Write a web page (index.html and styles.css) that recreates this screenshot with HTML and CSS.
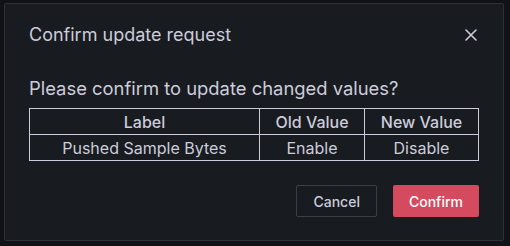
FILE: index.html
```html
<!DOCTYPE html>
<html lang="en">
<head>
    <meta charset="UTF-8">
    <title>Confirm update request</title>
    <link rel="stylesheet" href="styles.css">
</head>
<body>

<!--The confirm dialog-->
<div class="modal">
    <div class="modalHeader">
        <h2 class="modalTitle">Confirm update request</h2>
        <button class="closeBtn" aria-label="Close">
            <svg width="12" height="12" viewBox="0 0 12 12">
                <path d="M1 1 L11 11 M11 1 L1 11" stroke="#ccccdc" stroke-width="1.6" stroke-linecap="round"/>
            </svg>
        </button>
    </div>

    <div class="modalBody">
        <p class="question">Please confirm to update changed values?</p>

        <table class="changeTable">
            <tr>
                <th class="colLabel">Label</th>
                <th class="colOld">Old Value</th>
                <th class="colNew">New Value</th>
            </tr>
            <tr>
                <td>Pushed Sample Bytes</td>
                <td>Enable</td>
                <td>Disable</td>
            </tr>
        </table>

        <div class="buttonRow">
            <button class="btn btnCancel">Cancel</button>
            <button class="btn btnConfirm">Confirm</button>
        </div>
    </div>
</div>

</body>
</html>
```

FILE: styles.css
```css
/*CSS for whole page*/
body {
    margin: 0;
    background-color: #111217;
    font-family: Inter, "Noto Sans", sans-serif;
    color: #ccccdc;
}

/*CSS for the dialog box*/
.modal {
    box-sizing: border-box;
    width: 500px;
    height: 238px;
    margin: 3px 0 0 4px;
    background-color: #181b1f;
    border: 1px solid rgba(204, 204, 220, 0.12);
    border-radius: 2px;
}

.modalHeader {
    display: flex;
    justify-content: space-between;
    align-items: center;
    padding: 20px 24px 0 24px;
    height: 22px;
}

.modalTitle {
    margin: 0;
    font-size: 18px;
    font-weight: 400;
    line-height: 22px;
    color: #ccccdc;
}

.closeBtn {
    background: none;
    border: none;
    padding: 0;
    margin-right: 2px;
    width: 12px;
    height: 12px;
    display: flex;
}

.modalBody {
    padding: 0 24px;
}

.question {
    margin: 31px 0 9px 0;
    font-size: 18.4px;
    line-height: 22px;
}

/*CSS for the table of changed values*/
.changeTable {
    width: 450px;
    border-collapse: collapse;
    font-size: 16px;
}

.changeTable th, .changeTable td {
    border: 1px solid #ccccdc;
    padding: 0;
    height: 25px;
    text-align: center;
    font-weight: 500;
}

.changeTable td {
    font-weight: 400;
}

.colLabel {
    width: 229px;
}

.colOld {
    width: 104px;
}

/*CSS for the buttons at the bottom*/
.buttonRow {
    display: flex;
    justify-content: flex-end;
    gap: 16px;
    margin-top: 24px;
}

.btn {
    height: 32px;
    padding: 0 16px;
    font-family: Inter, "Noto Sans", sans-serif;
    font-size: 14px;
    font-weight: 500;
    border-radius: 2px;
}

.btnCancel {
    background-color: transparent;
    color: #ccccdc;
    border: 1px solid rgba(204, 204, 220, 0.2);
}

.btnConfirm {
    background-color: #d44a5e;
    color: #ffffff;
    border: none;
}
```
